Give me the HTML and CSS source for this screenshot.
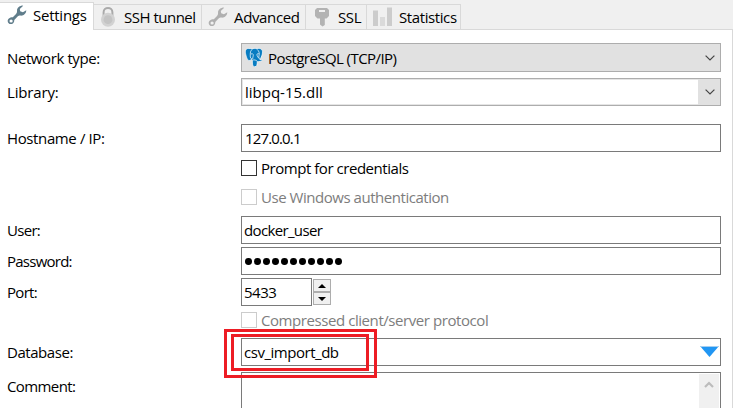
FILE: index.html
```html
<!DOCTYPE html>
<html lang="en">
<head>
<meta charset="utf-8">
<title>Session settings</title>
<link rel="stylesheet" href="styles.css">
</head>
<body>
<svg class="defs" aria-hidden="true"><defs>
<path id="wrench" d="M14.2.7C11.4 1.2 9.7 3.4 10 6.3C10.1 7.4 9.7 8.4 8.8 9.3L5.8 12.2C2.8 12.1.5 13.9.7 16.2C.9 18.3 2.7 19.5 4.8 18.9C6.6 18.4 7.2 17 7.3 14.9L10.6 11.6C11.4 10.8 12.3 10.6 13.4 10.6C16.8 10.9 19.2 8.6 19.3 5.3L15.9 7.2L13.2 6.3L12.8 3.9L16.2.8Q15.2.5 14.2.7ZM4.1 14.4A1.6 1.6 0 1 1 4.1 17.6A1.6 1.6 0 1 1 4.1 14.4Z" fill-rule="evenodd"/>
</defs></svg>
<main class="window">
  <nav class="tabs">
    <div class="tab active"><svg class="icon wrench" viewBox="0 0 20 20"><use href="#wrench"/></svg><span class="t-settings">Settings</span></div>
    <div class="tab ssh"><svg class="icon" viewBox="0 0 20 20"><path d="M5.6 9V5.2C5.6-.4 14.4-.4 14.4 5.2V9" fill="none" stroke="#aaa" stroke-width="2"/><circle cx="10" cy="12.7" r="7" fill="#d2d2d2"/><circle cx="10" cy="12.7" r="4.4" fill="#c4c4c4"/></svg><span class="t-ssh">SSH tunnel</span></div>
    <div class="tab advanced"><svg class="icon wrench" viewBox="0 0 20 20"><use href="#wrench"/></svg><span class="t-advanced">Advanced</span></div>
    <div class="tab ssl"><svg class="icon" viewBox="0 0 20 20"><path d="M5 1H15L17 3V9L14.5 11.5H12.8V18L10.5 19.5L8 17.4V11.5H5.5L3 9V3ZM7 3V5H13V3Z" fill="#b3b3b3" fill-rule="evenodd"/></svg><span class="t-ssl">SSL</span></div>
    <div class="tab stats"><svg class="icon" viewBox="0 0 20 20"><path d="M0 3.5H5V19H0ZM14 .5H19V19H14Z" fill="#ccc"/><path d="M7 10H12V19H7Z" fill="#dadada"/></svg><span class="t-stats">Statistics</span></div>
  </nav>
  <form class="form">
    <div class="row network"><label class="l-network">Network type:</label>
      <div class="box select"><svg class="pg" viewBox="0 0 18 19"><path d="M3.7.5C1 .2-.1 2.4.6 5.7C1.2 9 2.6 12.5 4.1 12.6C5 12.6 5.8 11.8 6.5 11.2L7.5 12.5C7.2 16 7.6 18.7 9.6 18.7C11.8 18.7 12.2 17.2 12.3 13.6C14.5 13.8 16.2 13.4 17.4 12.2C16.8 11.5 15.6 12 15 11.5C16.8 8.7 18.4 3.9 16.9 1.8C15.7.2 13.7.2 12 .7C10.3.2 8.8.3 7.2 1Q5.4.4 3.7.5Z" fill="#087cc1" stroke="#fff" stroke-width=".7"/><path d="M6.9 1.5C4.8 3.5 5.3 6.4 5.3 9Q5.3 10.5 6.9 10.8M6 6Q7.8 5.1 8.2 6.6C8.6 8.2 7.5 9.1 7.7 11.4M12 1.3C14.4 3.3 14.7 5.4 13.9 8Q13.6 9.6 14.7 11.4M13.9 5.8C12.3 5.3 11.5 6 12.2 7.8L13.7 10.2M8.1 12Q10 11.4 12.1 13" fill="none" stroke="#fff" stroke-width=".7"/></svg><span class="t-pg">PostgreSQL (TCP/IP)</span><svg class="chevron" viewBox="0 0 10 6"><path d="M.6.6 5 5 9.4.6"/></svg></div></div>
    <div class="row library"><label class="l-library">Library:</label>
      <div class="box combo"><span class="t-lib">libpq-15.dll</span><span class="drop"><svg class="chevron" viewBox="0 0 10 6"><path d="M.6.6 5 5 9.4.6"/></svg></span></div></div>
    <div class="row host"><label class="l-host">Hostname / IP:</label><div class="box"><span class="t-host">127.0.0.1</span></div></div>
    <div class="check prompt"><i></i><span class="t-prompt">Prompt for credentials</span></div>
    <div class="check disabled windows"><i></i><span class="t-windows">Use Windows authentication</span></div>
    <div class="row user"><label class="l-user">User:</label><div class="box"><span class="t-user">docker_user</span></div></div>
    <div class="row password"><label class="l-pass">Password:</label><div class="box"><span class="dots"><b></b><b></b><b></b><b></b><b></b><b></b><b></b><b></b><b></b><b></b><b></b></span></div></div>
    <div class="row port"><label class="l-port">Port:</label><div class="box short"><span class="t-port">5433</span></div>
      <div class="spinner"><span><svg viewBox="0 0 8 4"><path d="M0 4 4 0 8 4Z"/></svg></span><span><svg viewBox="0 0 8 4"><path d="M0 0H8L4 4Z"/></svg></span></div></div>
    <div class="check disabled compressed"><i></i><span class="t-comp">Compressed client/server protocol</span></div>
    <div class="row database"><label class="l-db">Database:</label><div class="box"><span class="t-db">csv_import_db</span><svg class="triangle" viewBox="0 0 19 11"><path d="M0 0H19L9.5 11Z" fill="#2196f3"/><path d="M0 .5H19" stroke="#a6cff0"/></svg></div><div class="highlight"><div></div></div></div>
    <div class="row comment"><label class="l-comment">Comment:</label><div class="box area"><div class="scroll"><svg viewBox="0 0 10 7"><path d="M1 6 5 2 9 6" fill="none" stroke="#bcbcbc" stroke-width="2.2"/></svg></div></div></div>
  </form>
</main>
</body>
</html>
```
FILE: styles.css
```css
* { box-sizing: border-box; }
body { margin: 0; background: #fff; color: #000; font: 15px/20px "Open Sans", "Noto Sans", sans-serif; white-space: nowrap; }
.defs { position: absolute; width: 0; height: 0; }
.window { width: 733px; height: 408px; overflow: hidden; display: flex; flex-direction: column; }
.tabs { height: 30px; flex: none; display: flex; align-items: flex-end; background: linear-gradient(#d9d9d9, #d9d9d9) bottom / 100% 1px no-repeat #f0f0f0; }
.tab { height: 26px; display: flex; align-items: center; border: 1px solid #d9d9d9; border-left: 0; background: #f0f0f0; }
.tab.active { width: 94px; height: 28px; background: #fff; border-bottom: 0; padding: 0 0 3px 7px; }
.tab.ssh { width: 108px; padding-left: 4px; }
.tab.advanced { width: 104px; padding-left: 6px; }
.tab.ssl { width: 61px; padding-left: 6px; }
.tab.stats { width: 94px; padding-left: 6px; }
.icon { width: 20px; height: 20px; flex: none; }
.tab span { margin-left: 6px; }
.t-settings { letter-spacing: -.25px; }
.t-ssh { letter-spacing: -.5px; }
.t-advanced { letter-spacing: -.35px; }
.t-ssl { letter-spacing: -.4px; }
.t-stats { letter-spacing: -.4px; }
.wrench { fill: #b0b0b0; }
.active .wrench { fill: #607d8b; }
.form { flex: 1; padding: 13px 0 0 7px; border-right: 1px solid #d9d9d9; }
.row { display: flex; height: 28px; position: relative; }
label { width: 234px; flex: none; line-height: 28px; }
.l-network { line-height: 30px; letter-spacing: -.4px; }
.l-library { letter-spacing: -.15px; }
.l-host { letter-spacing: -.38px; }
.l-user, .l-port { letter-spacing: -.7px; }
.l-pass { letter-spacing: -.75px; }
.l-db { letter-spacing: -.45px; }
.l-comment { letter-spacing: -.6px; }
.box { width: 480px; height: 28px; border: 1px solid #7a7a7a; display: flex; align-items: center; padding-left: 3px; background: #fff; }
.network { height: 29px; margin-bottom: 6px; }
.select { height: 29px; background: #e1e1e1; border-color: #adadad; }
.t-pg { margin-left: 5px; letter-spacing: -.57px; }
.t-host { letter-spacing: -.85px; }
.t-prompt, .t-windows { letter-spacing: -.46px; }
.t-user { margin-left: -1px; letter-spacing: -.65px; }
.t-port { margin-left: -1px; letter-spacing: -.5px; }
.t-comp { letter-spacing: -.43px; }
.t-db { margin-left: -1px; letter-spacing: -.47px; }
.pg { width: 18px; height: 19px; margin-bottom: 1px; }
.chevron { width: 10px; height: 6px; fill: none; stroke: #444; stroke-width: 1.2; }
.select .chevron { margin-left: auto; margin-right: 5px; }
.combo { border-color: #adadad; box-shadow: inset 0 0 0 1px #e5e5e5; }
.drop { width: 22px; height: 26px; background: #e1e1e1; margin-left: auto; display: flex; align-items: center; padding-left: 7px; }
.library { margin-bottom: 18px; }
.check { display: flex; align-items: center; height: 16px; margin-left: 234px; }
.check i { width: 16px; height: 16px; border: 1px solid #333; margin-right: 4px; }
.disabled { color: #7d7d7d; }
.disabled i { border-color: #ccc; }
.prompt { margin-top: 8px; }
.windows { margin: 13px 0 11px 234px; }
.user, .password { margin-bottom: 3px; }
.dots { display: flex; gap: 2.2px; padding-top: 1px; }
.dots b { width: 6.8px; height: 6.8px; border-radius: 50%; background: #000; }
.short { width: 71px; }
.spinner { width: 18px; height: 26px; margin: 1px 0 0 1px; display: grid; grid-template-rows: 13px 13px; }
.spinner span { border: 1px solid #adadad; background: #f0f0f0; display: grid; place-items: center; }
.spinner svg { width: 8px; height: 4px; }
.compressed { margin: 6px 0 10px 234px; }
.triangle { width: 19px; height: 11px; margin: 0 1px 2px auto; }
.highlight { position: absolute; left: 217px; top: -9px; width: 153px; height: 49px; border: 3px solid #ed1c24; padding: 2px 5px 4px 4px; z-index: 1; }
.highlight div { height: 37px; width: 138px; border: 3px solid #ed1c24; }
.comment { margin-top: 6px; }
.area { height: 50px; align-items: flex-start; }
.scroll { width: 20px; height: 48px; margin: 1px 1px 0 auto; background: #f0f0f0; display: flex; justify-content: center; padding-top: 7px; }
.scroll svg { width: 10px; height: 7px; }
```
